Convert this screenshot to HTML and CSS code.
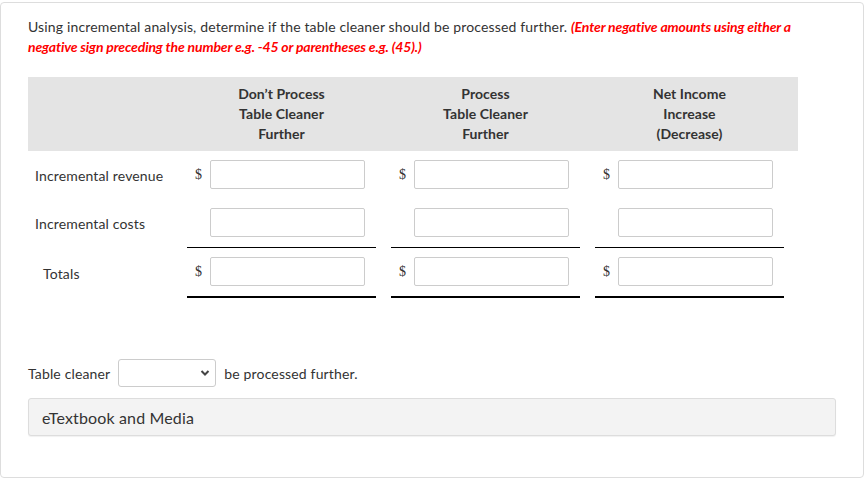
FILE: index.html
```html
<!DOCTYPE html>
<html>
<head>
<meta charset="utf-8">
<link rel="stylesheet" href="styles.css">
</head>
<body>
<div class="card">
  <p class="question">Using incremental analysis, determine if the table cleaner should be processed further. <span class="warn">(Enter negative amounts using either a negative sign preceding the number e.g. -45 or parentheses e.g. (45).)</span></p>

  <div class="table">
    <div class="row head">
      <div class="label"></div>
      <div class="hcell">Don’t Process<br>Table Cleaner<br>Further</div>
      <div class="hcell">Process<br>Table Cleaner<br>Further</div>
      <div class="hcell">Net Income<br>Increase<br>(Decrease)</div>
    </div>

    <div class="row">
      <div class="label">Incremental revenue</div>
      <div class="cell"><div class="wrap"><span class="cur">$</span><input class="amt" type="text"></div></div>
      <div class="cell"><div class="wrap"><span class="cur">$</span><input class="amt" type="text"></div></div>
      <div class="cell"><div class="wrap"><span class="cur">$</span><input class="amt" type="text"></div></div>
    </div>

    <div class="row">
      <div class="label">Incremental costs</div>
      <div class="cell"><div class="wrap thin"><span class="cur"></span><input class="amt" type="text"></div></div>
      <div class="cell"><div class="wrap thin"><span class="cur"></span><input class="amt" type="text"></div></div>
      <div class="cell"><div class="wrap thin"><span class="cur"></span><input class="amt" type="text"></div></div>
    </div>

    <div class="row">
      <div class="label total">Totals</div>
      <div class="cell"><div class="wrap thick"><span class="cur">$</span><input class="amt" type="text"></div></div>
      <div class="cell"><div class="wrap thick"><span class="cur">$</span><input class="amt" type="text"></div></div>
      <div class="cell"><div class="wrap thick"><span class="cur">$</span><input class="amt" type="text"></div></div>
    </div>
  </div>

  <div class="decision">
    <span>Table cleaner</span>
    <span class="select-wrap">
      <select class="choice"><option></option><option>should</option><option>should not</option></select>
      <svg class="chev" width="10" height="8" viewBox="0 0 10 8"><path d="M1.5 2 L5 5.5 L8.5 2" fill="none" stroke="#444" stroke-width="2"/></svg>
    </span>
    <span>be processed further.</span>
  </div>

  <div class="media">eTextbook and Media</div>
</div>
</body>
</html>
```

FILE: styles.css
```css
* { box-sizing: border-box; }

html, body {
  margin: 0;
  padding: 0;
  background: #ffffff;
}

body {
  font-family: Lato, "Open Sans", sans-serif;
  color: #333333;
  letter-spacing: 0.15px;
}

.card {
  margin: 2px 2px 0 0;
  height: 476px;
  border: 1px solid #dddddd;
  border-radius: 4px;
  padding: 14px 26px 0 27px;
}

.question {
  margin: 0;
  font-size: 14px;
  line-height: 20px;
  color: #333333;
}

.warn {
  color: #ff0000;
  font-weight: bold;
  font-style: italic;
  letter-spacing: -0.15px;
}

.table {
  margin-top: 20px;
  width: 770px;
}

.row {
  display: grid;
  grid-template-columns: 151.5px 204px 204px 204px;
}

.head {
  background: #e4e4e4;
  padding: 7px 0 7px;
}

.hcell {
  text-align: center;
  font-weight: bold;
  font-size: 14px;
  line-height: 20px;
  letter-spacing: 0.05px;
  color: #333333;
}

.label {
  display: flex;
  align-items: center;
  padding-left: 7px;
  font-size: 14px;
  color: #333333;
}

.label.total {
  padding-left: 15px;
}

.cell {
  padding: 0 7.5px;
}

.wrap {
  display: flex;
  align-items: center;
  padding: 9px 0 10px;
}

.wrap.thin {
  border-bottom: 1px solid #000000;
}

.wrap.thick {
  border-bottom: 2px solid #000000;
}

.cur {
  width: 23px;
  padding-left: 8px;
  font-family: "Liberation Serif", serif;
  font-size: 14px;
  color: #333333;
}

.amt {
  width: 155px;
  height: 29px;
  margin: 0;
  border: 1px solid #cccccc;
  border-radius: 2px;
  background: #ffffff;
  padding: 0 6px;
  font-family: Lato, sans-serif;
  font-size: 14px;
}

.decision {
  display: flex;
  align-items: center;
  gap: 8px;
  margin-top: 61px;
  font-size: 14px;
  color: #333333;
}

.select-wrap {
  position: relative;
  display: inline-block;
  width: 98px;
  height: 28px;
}

.choice {
  appearance: none;
  -webkit-appearance: none;
  width: 98px;
  height: 28px;
  margin: 0;
  border: 1px solid #cccccc;
  border-radius: 3px;
  background: #ffffff;
  font-family: Lato, sans-serif;
  font-size: 14px;
}

.chev {
  position: absolute;
  right: 6px;
  top: 10px;
  pointer-events: none;
}

.media {
  margin-top: 11px;
  width: 808px;
  height: 38px;
  display: flex;
  align-items: center;
  padding-left: 13px;
  background: #f3f3f3;
  border: 1px solid #dddddd;
  border-radius: 3px;
  box-shadow: 0 1px 1px rgba(0, 0, 0, 0.06);
  font-size: 16px;
  color: #333333;
}
```
